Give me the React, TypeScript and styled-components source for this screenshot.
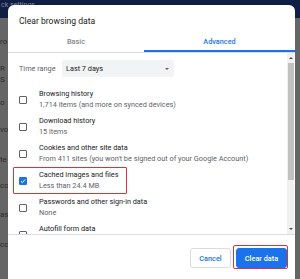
import styled, { createGlobalStyle, css } from "styled-components";

const GlobalStyle = createGlobalStyle`
  html, body {
    margin: 0;
    padding: 0;
    width: 300px;
    height: 279px;
    overflow: hidden;
    background: #666666;
    font-family: Roboto, "Liberation Sans", Arial, sans-serif;
  }
`;

const Screen = styled.div`
  position: relative;
  width: 300px;
  height: 279px;
  overflow: hidden;
  background: #656565;
`;

const TopBand = styled.div`
  height: 18px;
  background: #101d44;
  color: #7f889e;
  font-size: 7px;
  line-height: 10px;
  padding-left: 1px;
`;

const SideText = styled.div`
  display: flex;
  flex-direction: column;
  color: #2c2c2c;
  font-size: 8px;
  line-height: 10px;
`;

const SideLine = styled.div<{ $gap: number }>`
  margin-top: ${(p) => p.$gap}px;
  white-space: nowrap;
`;

const Dialog = styled.div`
  position: absolute;
  left: 8px;
  top: 5px;
  width: 287px;
  height: 290px;
  background: #ffffff;
  border-radius: 6px;
  display: flex;
  flex-direction: column;
`;

const Title = styled.div`
  height: 30px;
  box-sizing: border-box;
  padding: 11px 0 0 11px;
  font-size: 8.6px;
  line-height: 10px;
  color: #202124;
`;

const Tabs = styled.div`
  display: flex;
  border-bottom: 1px solid #dadce0;
`;

const Tab = styled.div<{ $active?: boolean }>`
  flex: ${(p) => (p.$active ? "0 0 151px" : "0 0 136px")};
  height: 17px;
  box-sizing: border-box;
  text-align: center;
  font-size: 7.3px;
  font-weight: 500;
  line-height: 13px;
  color: ${(p) => (p.$active ? "#1a73e8" : "#80868b")};
  border-bottom: 2px solid ${(p) => (p.$active ? "#1a73e8" : "transparent")};
`;

const Body = styled.div`
  display: flex;
  height: 181px;
  overflow: hidden;
`;

const Content = styled.div`
  flex: 1;
  padding-top: 7px;
  overflow: hidden;
`;

const TimeRow = styled.div`
  display: flex;
  align-items: center;
  height: 17px;
  padding-left: 11px;
  margin-bottom: 9px;
`;

const Label = styled.div`
  width: 43px;
  font-size: 7.3px;
  color: #5f6368;
`;

const Select = styled.div`
  width: 112px;
  height: 17px;
  box-sizing: border-box;
  padding: 0 5px 0 4px;
  background: #f1f3f4;
  border-radius: 2px;
  display: flex;
  align-items: center;
  justify-content: space-between;
  font-size: 7.3px;
  color: #202124;
`;

const Caret = styled.span`
  width: 0;
  height: 0;
  border-left: 2.5px solid transparent;
  border-right: 2.5px solid transparent;
  border-top: 2.5px solid #5f6368;
`;

const Item = styled.div<{ $marked?: boolean }>`
  position: relative;
  display: flex;
  align-items: center;
  height: 27px;
  padding-left: 11px;
  ${(p) =>
    p.$marked &&
    css`
      &::after {
        content: "";
        position: absolute;
        left: 5px;
        top: 0;
        width: 114px;
        height: 27px;
        box-sizing: border-box;
        border: 1.5px solid #d2363c;
        border-radius: 1px;
      }
    `}
`;

const Check = styled.div<{ $on?: boolean }>`
  flex: 0 0 auto;
  width: 8px;
  height: 8px;
  box-sizing: border-box;
  border-radius: 1px;
  margin-right: 12px;
  border: 1px solid ${(p) => (p.$on ? "#1a73e8" : "#5f6368")};
  background: ${(p) => (p.$on ? "#1a73e8" : "#ffffff")};
  display: flex;
  align-items: center;
  justify-content: center;
`;

const Texts = styled.div`
  display: flex;
  flex-direction: column;
  font-size: 7.3px;
  line-height: 10.6px;
  white-space: nowrap;
`;

const ItemTitle = styled.div`
  color: #202124;
`;

const ItemSub = styled.div`
  min-height: 10.6px;
  color: #5f6368;
`;

const Scrollbar = styled.div`
  width: 7px;
  margin-right: 1px;
  background: #f1f1f1;
  display: flex;
  flex-direction: column;
`;

const ArrowBox = styled.div`
  height: 10px;
  display: flex;
  align-items: center;
  justify-content: center;
`;

const Arrow = styled.span<{ $up?: boolean }>`
  width: 0;
  height: 0;
  border-left: 2px solid transparent;
  border-right: 2px solid transparent;
  ${(p) => (p.$up ? "border-bottom" : "border-top")}: 2px solid #505050;
`;

const Track = styled.div`
  flex: 1;
`;

const Thumb = styled.div`
  height: 117px;
  margin: 0 0.5px;
  background: #c1c1c1;
`;

const Footer = styled.div`
  border-top: 1px solid #dadce0;
  display: flex;
  justify-content: flex-end;
  gap: 5px;
  padding: 13px 8px 0 0;
`;

const Button = styled.div<{ $primary?: boolean }>`
  position: relative;
  width: ${(p) => (p.$primary ? "51px" : "41px")};
  height: 20px;
  box-sizing: border-box;
  border-radius: 3px;
  display: flex;
  align-items: center;
  justify-content: center;
  font-size: 7.3px;
  font-weight: 500;
  border: 1px solid ${(p) => (p.$primary ? "#1a73e8" : "#dadce0")};
  background: ${(p) => (p.$primary ? "#1a73e8" : "#ffffff")};
  color: ${(p) => (p.$primary ? "#ffffff" : "#1a73e8")};
  ${(p) =>
    p.$primary &&
    css`
      &::after {
        content: "";
        position: absolute;
        left: -4px;
        right: -2px;
        top: -4px;
        bottom: -2px;
        border: 1.5px solid #d2363c;
        border-radius: 2px;
      }
    `}
`;

const items = [
  { title: "Browsing history", sub: "1,714 items (and more on synced devices)" },
  { title: "Download history", sub: "15 items" },
  { title: "Cookies and other site data", sub: "From 411 sites (you won't be signed out of your Google Account)" },
  { title: "Cached images and files", sub: "Less than 24.4 MB", checked: true },
  { title: "Passwords and other sign-in data", sub: "None" },
  { title: "Autofill form data", sub: "" },
];

const sideLines = [
  { text: "ro", gap: 19 },
  { text: "R", gap: 17 },
  { text: "S", gap: 1 },
  { text: "o", gap: 13 },
  { text: "vo", gap: 17 },
  { text: "te", gap: 20 },
  { text: "co", gap: 16 },
  { text: "as", gap: 19 },
  { text: "cc", gap: 20 },
];

const CheckMark = () => (
  <svg width="6" height="6" viewBox="0 0 12 12">
    <path d="M2 6.5 L4.8 9.2 L10 3" fill="none" stroke="#ffffff" strokeWidth="2" />
  </svg>
);

export default function App() {
  return (
    <>
      <GlobalStyle />
      <Screen>
        <TopBand>ck settings</TopBand>
        <SideText>
          {sideLines.map((l, i) => (
            <SideLine key={i} $gap={l.gap}>{l.text}</SideLine>
          ))}
        </SideText>
        <Dialog>
          <Title>Clear browsing data</Title>
          <Tabs>
            <Tab>Basic</Tab>
            <Tab $active>Advanced</Tab>
          </Tabs>
          <Body>
            <Content>
              <TimeRow>
                <Label>Time range</Label>
                <Select>
                  Last 7 days
                  <Caret />
                </Select>
              </TimeRow>
              {items.map((it) => (
                <Item key={it.title} $marked={it.checked}>
                  <Check $on={it.checked}>{it.checked && <CheckMark />}</Check>
                  <Texts>
                    <ItemTitle>{it.title}</ItemTitle>
                    <ItemSub>{it.sub}</ItemSub>
                  </Texts>
                </Item>
              ))}
            </Content>
            <Scrollbar>
              <ArrowBox><Arrow $up /></ArrowBox>
              <Track><Thumb /></Track>
              <ArrowBox><Arrow /></ArrowBox>
            </Scrollbar>
          </Body>
          <Footer>
            <Button>Cancel</Button>
            <Button $primary>Clear data</Button>
          </Footer>
        </Dialog>
      </Screen>
    </>
  );
}
